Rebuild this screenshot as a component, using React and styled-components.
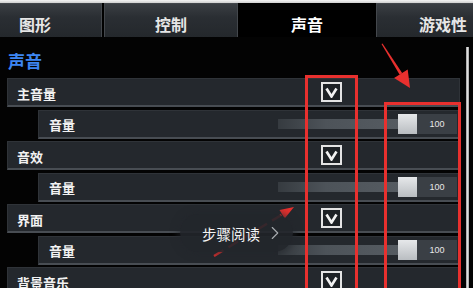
import React from "react";
import styled, { createGlobalStyle } from "styled-components";
import { ChevronRight } from "lucide-react";

const GlobalStyle = createGlobalStyle`
  html, body {
    margin: 0;
    padding: 0;
    background: #000;
  }
  #root {
    width: 473px;
    height: 288px;
    overflow: hidden;
  }
`;

const tabs = [
  { name: "图形" },
  { name: "控制" },
  { name: "声音", active: true },
  { name: "游戏性" },
];

const groups = ["主音量", "音效", "界面", "背景音乐"];

const App = () => {
  return (
    <Screen>
      <GlobalStyle />
      <TopStrip />
      <TabBar>
        {tabs.map((t) => (
          <Tab key={t.name} $active={t.active}>
            {t.name}
          </Tab>
        ))}
      </TabBar>
      <Body>
        <Panel>
          <Heading>声音</Heading>
          <List>
            {groups.map((g) => (
              <React.Fragment key={g}>
                <MainRow>
                  <Label>{g}</Label>
                  <Check>
                    <svg width="13" height="11" viewBox="0 0 13 11">
                      <polyline
                        points="1.5,1.5 6.5,9.5 11.5,1.5"
                        fill="none"
                        stroke="#f2f2f2"
                        strokeWidth="2.6"
                        strokeLinejoin="miter"
                      />
                    </svg>
                  </Check>
                </MainRow>
                <SubRow>
                  <SubLabel>音量</SubLabel>
                  <Slider>
                    <Track />
                    <Handle />
                    <Value>100</Value>
                  </Slider>
                </SubRow>
              </React.Fragment>
            ))}
          </List>
        </Panel>
        <Scrollbar />
      </Body>

      <Marks width="473" height="288" viewBox="0 0 473 288">
        <rect x="306.5" y="76.5" width="50" height="230" fill="none" stroke="#e8302e" strokeWidth="3" />
        <rect x="385.5" y="103.5" width="74" height="200" fill="none" stroke="#e8302e" strokeWidth="3" />
        <polygon points="381.5,44 382.5,43.6 402.3,73.2 399.5,74.6" fill="#e8302e" />
        <polygon points="394.1,78 407.7,69.4 410,88" fill="#e8302e" />
        <line x1="214" y1="256" x2="283" y2="214" stroke="#e8302e" strokeWidth="2.4" strokeDasharray="11 6" />
        <polygon points="279.5,210.1 284.7,218.6 294,207" fill="#e8302e" />
      </Marks>

      <Pill>
        步骤阅读
        <ChevronRight size={22} strokeWidth={1.2} color="#a8acb0" />
      </Pill>
    </Screen>
  );
};

const Screen = styled.div`
  position: relative;
  width: 473px;
  height: 288px;
  overflow: hidden;
  background: #030303;
  font-family: "Noto Sans CJK SC", "Noto Sans", sans-serif;
  color: #f0f0f0;
`;

const TopStrip = styled.div`
  height: 3px;
  background: linear-gradient(#f4f4f4, #cfcfcf);
`;

const TabBar = styled.div`
  display: flex;
  gap: 2px;
  height: 34px;
  margin-left: -32px;
  background: #000;
`;

const Tab = styled.div`
  flex: 0 0 134px;
  box-sizing: border-box;
  display: flex;
  align-items: center;
  justify-content: center;
  padding-top: 6px;
  font-size: 16px;
  font-weight: 700;
  color: ${(p) => (p.$active ? "#ffffff" : "#e6e6e6")};
  background: ${(p) =>
    p.$active ? "#000" : "linear-gradient(#3a3e43, #2a2e33 40%, #24282c)"};
  border: 1px solid ${(p) => (p.$active ? "#000" : "#43474c")};
  border-bottom: none;
`;

const Body = styled.div`
  display: flex;
  align-items: flex-start;
`;

const Panel = styled.div`
  width: 460px;
  display: flex;
  flex-direction: column;
`;

const Heading = styled.div`
  height: 41px;
  box-sizing: border-box;
  padding: 6px 0 0 8px;
  display: flex;
  align-items: center;
  font-size: 17px;
  font-weight: 700;
  color: #3d86f2;
`;

const List = styled.div`
  display: flex;
  flex-direction: column;
  gap: 2.5px;
`;

const RowBase = styled.div`
  height: 29px;
  box-sizing: border-box;
  display: flex;
  align-items: center;
  background: #24282d;
  border: 1px solid #2f3338;
  border-bottom: 2px solid #484d53;
`;

const MainRow = styled(RowBase)`
  margin-left: 7px;
`;

const SubRow = styled(RowBase)`
  margin-left: 38px;
`;

const Label = styled.span`
  padding: 2px 0 0 9px;
  font-size: 13px;
  font-weight: 700;
  color: #f2f2f2;
`;

const SubLabel = styled(Label)`
  padding-left: 10px;
`;

const Check = styled.div`
  margin-left: auto;
  margin-right: 117px;
  width: 21px;
  height: 20px;
  box-sizing: border-box;
  border: 2px solid #e4e4e4;
  background: #1d2125;
  display: flex;
  align-items: center;
  justify-content: center;
`;

const Slider = styled.div`
  margin-left: auto;
  margin-right: 2px;
  display: flex;
  align-items: center;
`;

const Track = styled.div`
  width: 120px;
  height: 10px;
  background: linear-gradient(90deg, #363b40, #4d5359 40%, #555b61);
`;

const Handle = styled.div`
  width: 19px;
  height: 20px;
  background: linear-gradient(#e6e8ea, #b9bdc1);
`;

const Value = styled.div`
  width: 40px;
  height: 20px;
  background: #3a3f45;
  display: flex;
  align-items: center;
  justify-content: center;
  font-family: "Liberation Sans", sans-serif;
  font-size: 9px;
  color: #e8e8e8;
`;

const Scrollbar = styled.div`
  margin: 10px 0 0 6px;
  width: 3px;
  height: 260px;
  background: linear-gradient(90deg, #9a9a9a, #dedede, #a0a0a0);
`;

const Marks = styled.svg`
  position: absolute;
  left: 0;
  top: 0;
  pointer-events: none;
`;

const Pill = styled.div`
  position: absolute;
  left: 180px;
  top: 214px;
  width: 113px;
  height: 38px;
  box-sizing: border-box;
  padding-left: 22px;
  border-radius: 19px;
  display: flex;
  align-items: center;
  gap: 4px;
  background: rgba(34, 38, 43, 0.9);
  box-shadow: 0 0 6px 3px rgba(34, 38, 43, 0.55);
  font-size: 14.5px;
  font-weight: 400;
  color: #f4f4f4;
`;

export default App;
